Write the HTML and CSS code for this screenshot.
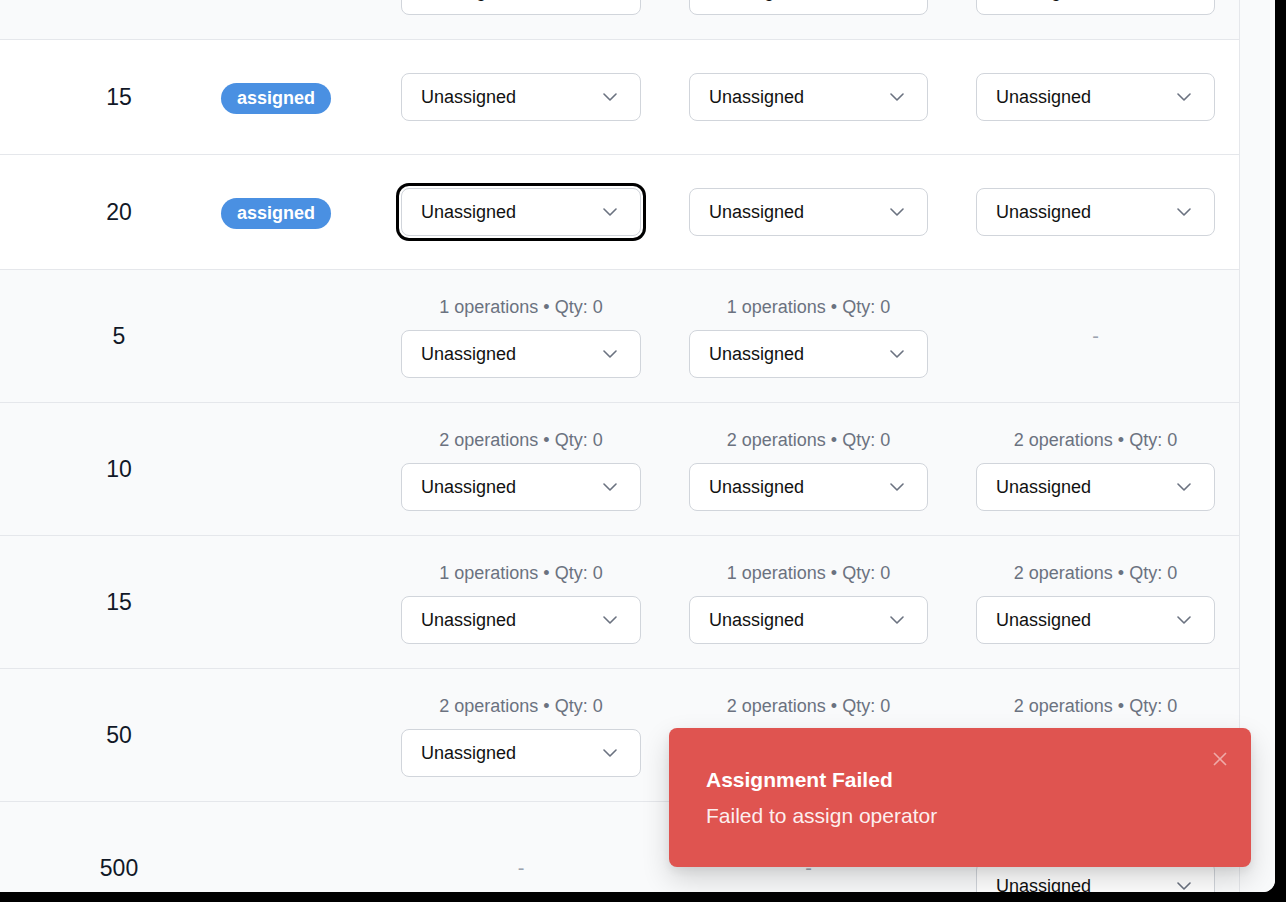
FILE: index.html
```html
<!DOCTYPE html>
<html lang="en">
<head>
<meta charset="utf-8">
<title>Assignments</title>
<link rel="stylesheet" href="styles.css">
</head>
<body>
<div class="frame">
  <div class="table">
    <div class="rows">
      <!-- row 0 (scrolled partially out of view) -->
      <div class="row ops">
        <div class="cell"></div>
        <div class="cell qty">10</div>
        <div class="cell"></div>
        <div class="cell sel"><div class="label">2 operations • Qty: 0</div><div class="select"><span>Unassigned</span><svg class="chev" viewBox="0 0 14 8"><polyline points="1,1 7,7 13,1"/></svg></div></div>
        <div class="cell sel"><div class="label">2 operations • Qty: 0</div><div class="select"><span>Unassigned</span><svg class="chev" viewBox="0 0 14 8"><polyline points="1,1 7,7 13,1"/></svg></div></div>
        <div class="cell sel"><div class="label">2 operations • Qty: 0</div><div class="select"><span>Unassigned</span><svg class="chev" viewBox="0 0 14 8"><polyline points="1,1 7,7 13,1"/></svg></div></div>
      </div>
      <!-- row 1 -->
      <div class="row plain">
        <div class="cell"></div>
        <div class="cell qty">15</div>
        <div class="cell"><span class="badge">assigned</span></div>
        <div class="cell sel"><div class="select"><span>Unassigned</span><svg class="chev" viewBox="0 0 14 8"><polyline points="1,1 7,7 13,1"/></svg></div></div>
        <div class="cell sel"><div class="select"><span>Unassigned</span><svg class="chev" viewBox="0 0 14 8"><polyline points="1,1 7,7 13,1"/></svg></div></div>
        <div class="cell sel"><div class="select"><span>Unassigned</span><svg class="chev" viewBox="0 0 14 8"><polyline points="1,1 7,7 13,1"/></svg></div></div>
      </div>
      <!-- row 2 -->
      <div class="row plain">
        <div class="cell"></div>
        <div class="cell qty">20</div>
        <div class="cell"><span class="badge">assigned</span></div>
        <div class="cell sel"><div class="select focused"><span>Unassigned</span><svg class="chev" viewBox="0 0 14 8"><polyline points="1,1 7,7 13,1"/></svg></div></div>
        <div class="cell sel"><div class="select"><span>Unassigned</span><svg class="chev" viewBox="0 0 14 8"><polyline points="1,1 7,7 13,1"/></svg></div></div>
        <div class="cell sel"><div class="select"><span>Unassigned</span><svg class="chev" viewBox="0 0 14 8"><polyline points="1,1 7,7 13,1"/></svg></div></div>
      </div>
      <!-- row 3 -->
      <div class="row ops">
        <div class="cell"></div>
        <div class="cell qty">5</div>
        <div class="cell"></div>
        <div class="cell sel"><div class="label">1 operations • Qty: 0</div><div class="select"><span>Unassigned</span><svg class="chev" viewBox="0 0 14 8"><polyline points="1,1 7,7 13,1"/></svg></div></div>
        <div class="cell sel"><div class="label">1 operations • Qty: 0</div><div class="select"><span>Unassigned</span><svg class="chev" viewBox="0 0 14 8"><polyline points="1,1 7,7 13,1"/></svg></div></div>
        <div class="cell sel"><span class="dash">-</span></div>
      </div>
      <!-- row 4 -->
      <div class="row ops">
        <div class="cell"></div>
        <div class="cell qty">10</div>
        <div class="cell"></div>
        <div class="cell sel"><div class="label">2 operations • Qty: 0</div><div class="select"><span>Unassigned</span><svg class="chev" viewBox="0 0 14 8"><polyline points="1,1 7,7 13,1"/></svg></div></div>
        <div class="cell sel"><div class="label">2 operations • Qty: 0</div><div class="select"><span>Unassigned</span><svg class="chev" viewBox="0 0 14 8"><polyline points="1,1 7,7 13,1"/></svg></div></div>
        <div class="cell sel"><div class="label">2 operations • Qty: 0</div><div class="select"><span>Unassigned</span><svg class="chev" viewBox="0 0 14 8"><polyline points="1,1 7,7 13,1"/></svg></div></div>
      </div>
      <!-- row 5 -->
      <div class="row ops">
        <div class="cell"></div>
        <div class="cell qty">15</div>
        <div class="cell"></div>
        <div class="cell sel"><div class="label">1 operations • Qty: 0</div><div class="select"><span>Unassigned</span><svg class="chev" viewBox="0 0 14 8"><polyline points="1,1 7,7 13,1"/></svg></div></div>
        <div class="cell sel"><div class="label">1 operations • Qty: 0</div><div class="select"><span>Unassigned</span><svg class="chev" viewBox="0 0 14 8"><polyline points="1,1 7,7 13,1"/></svg></div></div>
        <div class="cell sel"><div class="label">2 operations • Qty: 0</div><div class="select"><span>Unassigned</span><svg class="chev" viewBox="0 0 14 8"><polyline points="1,1 7,7 13,1"/></svg></div></div>
      </div>
      <!-- row 6 -->
      <div class="row ops">
        <div class="cell"></div>
        <div class="cell qty">50</div>
        <div class="cell"></div>
        <div class="cell sel"><div class="label">2 operations • Qty: 0</div><div class="select"><span>Unassigned</span><svg class="chev" viewBox="0 0 14 8"><polyline points="1,1 7,7 13,1"/></svg></div></div>
        <div class="cell sel"><div class="label">2 operations • Qty: 0</div><div class="select"><span>Unassigned</span><svg class="chev" viewBox="0 0 14 8"><polyline points="1,1 7,7 13,1"/></svg></div></div>
        <div class="cell sel"><div class="label">2 operations • Qty: 0</div><div class="select"><span>Unassigned</span><svg class="chev" viewBox="0 0 14 8"><polyline points="1,1 7,7 13,1"/></svg></div></div>
      </div>
      <!-- row 7 -->
      <div class="row ops">
        <div class="cell"></div>
        <div class="cell qty">500</div>
        <div class="cell"></div>
        <div class="cell sel"><span class="dash">-</span></div>
        <div class="cell sel"><span class="dash">-</span></div>
        <div class="cell sel"><div class="label">1 operations • Qty: 0</div><div class="select"><span>Unassigned</span><svg class="chev" viewBox="0 0 14 8"><polyline points="1,1 7,7 13,1"/></svg></div></div>
      </div>
    </div>
  </div>
  <div class="side"></div>

  <div class="toast" role="alert">
    <div class="toast-title">Assignment Failed</div>
    <div class="toast-text">Failed to assign operator</div>
    <svg class="toast-close" viewBox="0 0 14 14"><path d="M1 1 L13 13 M13 1 L1 13"/></svg>
  </div>
</div>
</body>
</html>
```

FILE: styles.css
```css
* { box-sizing: border-box; }

html, body {
  margin: 0;
  padding: 0;
  background: #000;
  font-family: "Liberation Sans", Arial, sans-serif;
}

.frame {
  position: relative;
  width: 1275px;
  height: 892px;
  overflow: hidden;
  background: #fff;
  border-bottom-right-radius: 12px;
  display: flex;
}

.table {
  width: 1240px;
  flex: none;
  border-right: 1px solid #e5e7eb;
  background: #fff;
}

.rows {
  margin-top: -93px;
}

.row {
  display: grid;
  grid-template-columns: 63px 112px 202px 288px 287px 287px;
  border-bottom: 1px solid #e5e7eb;
}

.row.plain {
  background: #fff;
  padding: 33px 0;
}

.row.ops {
  background: #f9fafb;
  padding: 24px 0;
}

.cell {
  display: flex;
  flex-direction: column;
  align-items: center;
  justify-content: center;
}

.cell.sel {
  padding: 0 24px;
  align-items: stretch;
}

.qty {
  font-size: 23px;
  color: #111827;
}

.badge {
  display: inline-flex;
  align-items: center;
  height: 31px;
  margin-top: 3px;
  padding: 0 16px;
  border-radius: 16px;
  background: #4a90e2;
  color: #fff;
  font-weight: 700;
  font-size: 18px;
}

.label {
  height: 24px;
  line-height: 26px;
  margin-bottom: 12px;
  text-align: center;
  font-size: 18px;
  color: #6b7280;
  white-space: nowrap;
}

.select {
  height: 48px;
  background: #fff;
  border: 1px solid #d1d5db;
  border-radius: 8px;
  display: flex;
  align-items: center;
  justify-content: space-between;
  padding: 0 23px 0 19px;
  font-size: 18px;
  color: #111;
}

.select.focused {
  box-shadow: 0 0 0 2px #fff, 0 0 0 5px #000;
}

.chev {
  width: 14px;
  height: 8px;
  fill: none;
  stroke: #6b7280;
  stroke-width: 1.6;
  stroke-linecap: round;
  stroke-linejoin: round;
}

.dash {
  align-self: center;
  font-size: 20px;
  color: #9ca3af;
}

.side {
  flex: 1;
  background: #f9fafb;
}

.toast {
  position: absolute;
  right: 24px;
  bottom: 25px;
  width: 582px;
  height: 139px;
  background: #df5450;
  border-radius: 8px;
  padding: 38px 37px;
  color: #fff;
  box-shadow: 0 12px 28px rgba(0, 0, 0, 0.16), 0 4px 8px rgba(0, 0, 0, 0.06);
}

.toast-title {
  font-size: 21px;
  font-weight: 700;
  line-height: 28px;
  margin-bottom: 8px;
}

.toast-text {
  font-size: 21px;
  line-height: 28px;
  color: rgba(255, 255, 255, 0.92);
}

.toast-close {
  position: absolute;
  top: 24px;
  right: 24px;
  width: 14px;
  height: 14px;
  fill: none;
  stroke: rgba(255, 255, 255, 0.5);
  stroke-width: 1.6;
}
```
